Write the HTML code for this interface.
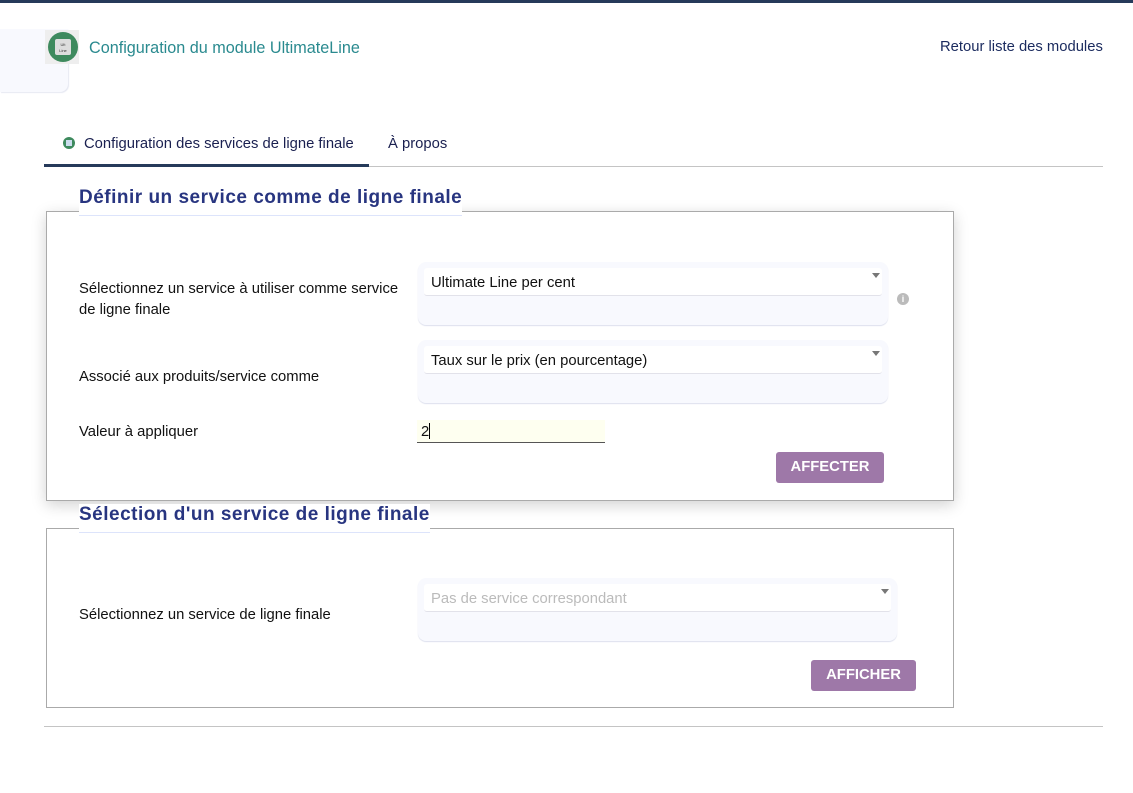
<!DOCTYPE html>
<html><head><meta charset="utf-8"><style>
*{margin:0;padding:0;box-sizing:border-box}
body{width:1133px;height:793px;background:#fff;font-family:"Liberation Sans",sans-serif;position:relative;overflow:hidden;font-size:14.8px;color:#111}
.a{position:absolute}
.lab{position:absolute;left:79px;font-size:14.8px;line-height:21px;color:#111}
.sc{position:absolute;background:#f8f9fe;border-radius:8px;box-shadow:0 1px 1px #dde0ee}
.si{position:absolute;left:6px;right:6px;top:6px;height:28px;background:#fff;border-bottom:1px solid #e2e2ea;border-radius:3px;padding:7px 7px;font-size:14.8px;line-height:16px}
.si:after{content:"";position:absolute;right:2px;top:5px;border-left:4px solid transparent;border-right:4px solid transparent;border-top:5px solid #777}
.leg{position:absolute;left:79px;font-weight:bold;font-size:19px;color:#283580;background:#fff;padding-bottom:6px;border-bottom:1px solid #dde4fb;letter-spacing:0.5px;line-height:22px}
.btn{position:absolute;background:#9e78a8;color:#fff;font-weight:bold;font-size:14.8px;border-radius:3px;text-align:center;line-height:31px}
</style></head><body>
<div class="a" style="left:0;top:0;width:1133px;height:3px;background:#263a5a"></div>
<div class="a" style="left:0;top:29px;width:68px;height:63px;background:#f8f9fe;border-radius:0 0 8px 0;box-shadow:1px 1px 1px #e6e8f2"></div>
<div class="a" style="left:45px;top:30px;width:34px;height:34px;background:#eee">
<div class="a" style="left:3px;top:2px;width:30px;height:30px;border-radius:50%;background:#3e8a5e"></div>
<div class="a" style="left:10px;top:9px;width:16px;height:16px;background:#ddd;border-radius:2px;font-size:4px;color:#333;text-align:center;line-height:6px;padding-top:3px">Ult<br>Line</div>
</div>
<div class="a" style="left:89px;top:39px;font-size:16.2px;color:#2a8a8f">Configuration du module UltimateLine</div>
<div class="a" style="left:940px;top:39px;font-size:14.8px;color:#1a2a5e">Retour liste des modules</div>

<div class="a" style="left:63px;top:137px;width:12px;height:12px;border-radius:50%;background:#3e8a5e"><div class="a" style="left:3px;top:3px;width:6px;height:6px;background:#cde"></div></div>
<div class="a" style="left:84px;top:136px;font-size:14.8px;color:#1a2050">Configuration des services de ligne finale</div>
<div class="a" style="left:388px;top:136px;font-size:14.8px;color:#1a2050">À propos</div>
<div class="a" style="left:44px;top:164px;width:325px;height:3px;background:#263a5a"></div>
<div class="a" style="left:369px;top:166px;width:734px;height:1px;background:#c4c4c4"></div>

<div class="a" style="left:46px;top:211px;width:908px;height:290px;border:1px solid #aaa;box-shadow:0 4px 14px rgba(0,0,0,.18)"></div>
<div class="leg" style="top:187px">Définir un service comme de ligne finale</div>
<div class="lab" style="top:279px">Sélectionnez un service à utiliser comme service<br>de ligne finale</div>
<div class="sc" style="left:418px;top:262px;width:470px;height:63px"><div class="si">Ultimate Line per cent</div></div>
<div class="a" style="left:897px;top:293px;width:12px;height:12px;border-radius:50%;background:#bbb;color:#fff;font-size:9px;font-weight:bold;text-align:center;line-height:12px">i</div>
<div class="lab" style="top:367px">Associé aux produits/service comme</div>
<div class="sc" style="left:418px;top:340px;width:470px;height:63px"><div class="si">Taux sur le prix (en pourcentage)</div></div>
<div class="lab" style="top:422px">Valeur à appliquer</div>
<div class="a" style="left:417px;top:420px;width:188px;height:23px;background:#fefff0;border-bottom:1px solid #555;padding:3px 4px;font-size:14.8px;line-height:18px">2<span style="display:inline-block;width:1px;height:16px;background:#000;vertical-align:-3px"></span></div>
<div class="btn" style="left:776px;top:452px;width:108px;height:31px">AFFECTER</div>

<div class="a" style="left:46px;top:528px;width:908px;height:180px;border:1px solid #aaa"></div>
<div class="leg" style="top:504px">Sélection d'un service de ligne finale</div>
<div class="lab" style="top:605px">Sélectionnez un service de ligne finale</div>
<div class="sc" style="left:418px;top:578px;width:479px;height:63px"><div class="si" style="color:#bbb">Pas de service correspondant</div></div>
<div class="btn" style="left:811px;top:660px;width:105px;height:31px">AFFICHER</div>
<div class="a" style="left:44px;top:726px;width:1059px;height:1px;background:#c4c4c4"></div>
</body></html>
